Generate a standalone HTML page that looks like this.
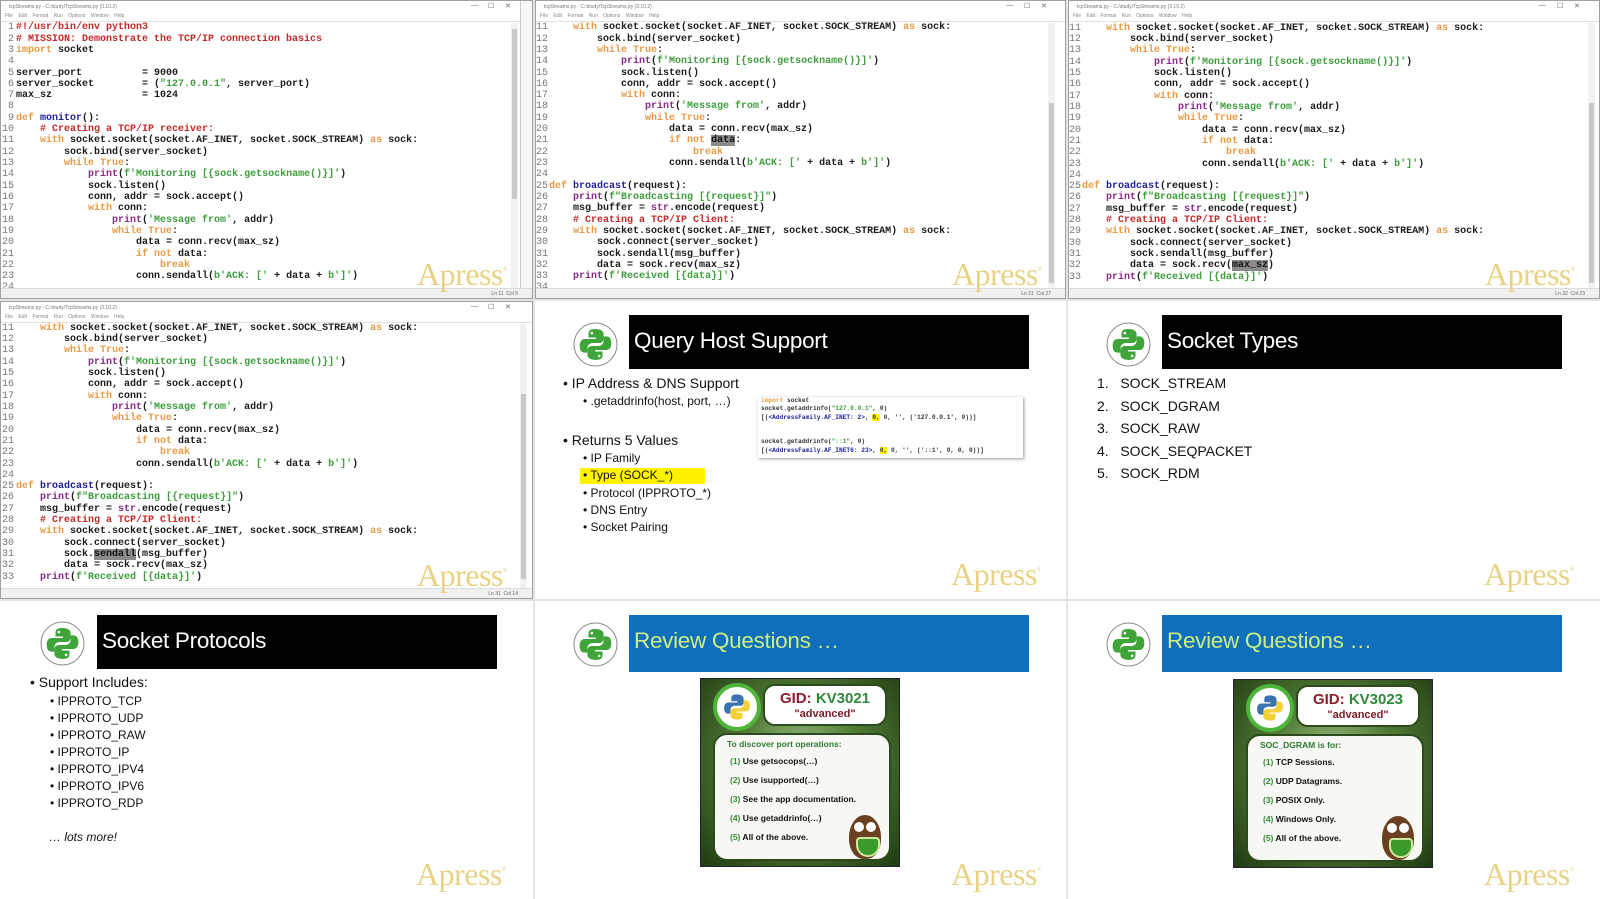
<!DOCTYPE html>
<html><head><meta charset="utf-8">
<style>
*{margin:0;padding:0;box-sizing:border-box}
body{width:1600px;height:899px;background:#e4e4e4;position:relative;overflow:hidden;font-family:"Liberation Sans",sans-serif}
.cell{position:absolute;overflow:hidden;background:#fff}
.win{border:1px solid #a0a0a0}
.tb{position:absolute;left:0;top:0;width:100%;height:12px;font-size:5px;color:#777;padding:3px 0 0 8px;white-space:nowrap}
.ctl{position:absolute;top:1px;font-size:7px;color:#666}
.mb{position:absolute;left:0;top:12px;width:100%;height:9px;font-size:5px;color:#888;padding-left:4px;word-spacing:4px;border-bottom:1px solid #e0e0e0}
pre{position:absolute;margin:0;font-family:"Liberation Mono",monospace;font-weight:bold;font-size:10px;line-height:11.32px;color:#1c1c1c}
.ln{color:#777;font-weight:normal;text-align:right}
.k{color:#e99a45}.c{color:#c22a2a}.s{color:#3d9e3d}.b{color:#8a2b8a}.f{color:#1f1f9a}
.hl{background:#8a8a8a;color:#111}
.sb{position:absolute;top:22px;width:7px;height:266px;background:#f2f2f2}
.sb i{position:absolute;left:1px;width:5px;background:#c9c9c9;display:block}
.st{position:absolute;left:0;bottom:0;width:100%;height:10px;background:#f0f0f0;border-top:1px solid #dcdcdc;font-size:5px;color:#666;text-align:right;padding:2px 14px 0 0}
.rs{position:absolute;right:0;top:0;width:12px;height:100%;background:#f7f7f7;border-left:1px solid #ccc}
.apress{position:absolute;left:416px;top:255px;font-family:"Liberation Serif",serif;font-size:32px;color:#e8d283;letter-spacing:-0.5px}
.apress sup{font-size:6px;vertical-align:14px}
.hdr{position:absolute;left:94px;top:14px;width:400px;height:54px;background:#000;color:#fff;font-size:22.5px;padding:13px 0 0 5px;letter-spacing:-0.3px}
.hdr.blue{background:#0f6fbd;color:#cbee80}
.logo{position:absolute;width:45px;height:45px}
.t1{position:absolute;font-size:14px;color:#111;white-space:nowrap}
.t2{position:absolute;font-size:12px;color:#111;white-space:nowrap}
.card{position:absolute;width:200px;height:189px;background:radial-gradient(ellipse at 50% 45%,#a8c890 0%,#4f7a34 45%,#1f3a12 100%);border:1px solid #223}
.gid{position:absolute;left:62px;top:5px;width:124px;height:42px;background:#fff;border-radius:12px;border:2px solid #2c4a1c;font-weight:bold;text-align:center}
.gid .a{font-size:15px;color:#8c1d2d;margin-top:4px}
.gid .a span{color:#2f8a3a}
.gid .b2{font-size:11px;color:#7a1a26;margin-top:1px}
.q{position:absolute;left:12px;top:54px;width:178px;height:128px;background:#f7f8f4;border-radius:14px;border:2px solid #2c4a1c;font-weight:bold;font-size:8.5px;color:#111}
.q div{position:absolute;white-space:nowrap}
.q .n{color:#3a8a3a}
.pylogo{position:absolute;left:12px;top:4px;width:48px;height:48px;border-radius:50%;background:#fff;border:4px solid #4fb43a}
</style></head><body>
<svg width="0" height="0" style="position:absolute">
<defs>
<symbol id="py" viewBox="0 0 100 100">
<path d="M49 8C33 8 31 14 31 22V31H51V35H21C12 35 7 42 7 54C7 66 12 72 21 72H28V61C28 52 34 46 43 46H60C67 46 72 41 72 34V22C72 14 65 8 49 8Z"/>
<path transform="rotate(180 50 50)" d="M49 8C33 8 31 14 31 22V31H51V35H21C12 35 7 42 7 54C7 66 12 72 21 72H28V61C28 52 34 46 43 46H60C67 46 72 41 72 34V22C72 14 65 8 49 8Z"/>
<circle cx="40" cy="19" r="3.5" fill="#fff"/><circle cx="60" cy="81" r="3.5" fill="#fff"/>
</symbol>
</defs></svg>

<!-- ROW 1 COL 1 -->
<div class="cell win" style="left:0;top:0;width:533px;height:299px">
<div class="tb">tcpStreams.py - C:/study/TcpStreams.py (3.10.2)</div>
<div class="ctl" style="left:470px">—</div><div class="ctl" style="left:487px">☐</div><div class="ctl" style="left:504px">✕</div>
<div class="mb">File Edit Format Run Options Window Help</div>
<pre class="ln" style="left:0;top:21.3px;width:13px">1
2
3
4
5
6
7
8
9
10
11
12
13
14
15
16
17
18
19
20
21
22
23
24</pre>
<pre style="left:15px;top:21.3px"><span class="c">#!/usr/bin/env python3</span>
<span class="c"># MISSION: Demonstrate the TCP/IP connection basics</span>
<span class="k">import</span> socket

server_port          = 9000
server_socket        = (<span class="s">"127.0.0.1"</span>, server_port)
max_sz               = 1024

<span class="k">def</span> <span class="f">monitor</span>():
    <span class="c"># Creating a TCP/IP receiver:</span>
    <span class="k">with</span> socket.socket(socket.AF_INET, socket.SOCK_STREAM) <span class="k">as</span> sock:
        sock.bind(server_socket)
        <span class="k">while True</span>:
            <span class="b">print</span>(<span class="s">f'Monitoring [{sock.getsockname()}]'</span>)
            sock.listen()
            conn, addr = sock.accept()
            <span class="k">with</span> conn:
                <span class="b">print</span>(<span class="s">'Message from'</span>, addr)
                <span class="k">while True</span>:
                    data = conn.recv(max_sz)
                    <span class="k">if not</span> data:
                        <span class="k">break</span>
                    conn.sendall(<span class="s">b'ACK: ['</span> + data + <span class="s">b']'</span>)
</pre>
<div class="sb" style="left:510px"><i style="top:6px;height:170px"></i></div>
<div class="rs"></div>
<div class="st">Ln 11 &nbsp;Col 5</div>
<div class="apress">Apress<sup>®</sup></div>
</div>

<!-- ROW 1 COL 2 -->
<div class="cell win" style="left:535px;top:0;width:531px;height:299px">
<div class="tb">tcpStreams.py - C:/study/TcpStreams.py (3.10.2)</div>
<div class="ctl" style="left:470px">—</div><div class="ctl" style="left:488px">☐</div><div class="ctl" style="left:505px">✕</div>
<div class="mb">File Edit Format Run Options Window Help</div>
<pre class="ln" style="left:0;top:21.3px;width:11px">11
12
13
14
15
16
17
18
19
20
21
22
23
24
25
26
27
28
29
30
31
32
33
34</pre>
<pre style="left:13px;top:21.3px">    <span class="k">with</span> socket.socket(socket.AF_INET, socket.SOCK_STREAM) <span class="k">as</span> sock:
        sock.bind(server_socket)
        <span class="k">while True</span>:
            <span class="b">print</span>(<span class="s">f'Monitoring [{sock.getsockname()}]'</span>)
            sock.listen()
            conn, addr = sock.accept()
            <span class="k">with</span> conn:
                <span class="b">print</span>(<span class="s">'Message from'</span>, addr)
                <span class="k">while True</span>:
                    data = conn.recv(max_sz)
                    <span class="k">if not</span> <span class="hl">data</span>:
                        <span class="k">break</span>
                    conn.sendall(<span class="s">b'ACK: ['</span> + data + <span class="s">b']'</span>)

<span class="k">def</span> <span class="f">broadcast</span>(request):
    <span class="b">print</span>(<span class="s">f"Broadcasting [{request}]"</span>)
    msg_buffer = <span class="b">str</span>.encode(request)
    <span class="c"># Creating a TCP/IP Client:</span>
    <span class="k">with</span> socket.socket(socket.AF_INET, socket.SOCK_STREAM) <span class="k">as</span> sock:
        sock.connect(server_socket)
        sock.sendall(msg_buffer)
        data = sock.recv(max_sz)
    <span class="b">print</span>(<span class="s">f'Received [{data}]'</span>)
</pre>
<div class="sb" style="left:512px"><i style="top:80px;height:180px"></i></div>
<div class="st">Ln 21 &nbsp;Col 27</div>
<div class="apress">Apress<sup>®</sup></div>
</div>

<!-- ROW 1 COL 3 -->
<div class="cell win" style="left:1068px;top:0;width:532px;height:299px">
<div class="tb">tcpStreams.py - C:/study/TcpStreams.py (3.10.2)</div>
<div class="ctl" style="left:470px">—</div><div class="ctl" style="left:488px">☐</div><div class="ctl" style="left:505px">✕</div>
<div class="mb">File Edit Format Run Options Window Help</div>
<pre class="ln" style="left:0;top:21.8px;width:11px">11
12
13
14
15
16
17
18
19
20
21
22
23
24
25
26
27
28
29
30
31
32
33</pre>
<pre style="left:13px;top:21.8px">    <span class="k">with</span> socket.socket(socket.AF_INET, socket.SOCK_STREAM) <span class="k">as</span> sock:
        sock.bind(server_socket)
        <span class="k">while True</span>:
            <span class="b">print</span>(<span class="s">f'Monitoring [{sock.getsockname()}]'</span>)
            sock.listen()
            conn, addr = sock.accept()
            <span class="k">with</span> conn:
                <span class="b">print</span>(<span class="s">'Message from'</span>, addr)
                <span class="k">while True</span>:
                    data = conn.recv(max_sz)
                    <span class="k">if not</span> data:
                        <span class="k">break</span>
                    conn.sendall(<span class="s">b'ACK: ['</span> + data + <span class="s">b']'</span>)

<span class="k">def</span> <span class="f">broadcast</span>(request):
    <span class="b">print</span>(<span class="s">f"Broadcasting [{request}]"</span>)
    msg_buffer = <span class="b">str</span>.encode(request)
    <span class="c"># Creating a TCP/IP Client:</span>
    <span class="k">with</span> socket.socket(socket.AF_INET, socket.SOCK_STREAM) <span class="k">as</span> sock:
        sock.connect(server_socket)
        sock.sendall(msg_buffer)
        data = sock.recv(<span class="hl">max_sz</span>)
    <span class="b">print</span>(<span class="s">f'Received [{data}]'</span>)</pre>
<div class="sb" style="left:519px"><i style="top:80px;height:180px"></i></div>
<div class="st">Ln 32 &nbsp;Col 23</div>
<div class="apress">Apress<sup>®</sup></div>
</div>

<!-- ROW 2 COL 1 -->
<div class="cell win" style="left:0;top:301px;width:533px;height:298px">
<div class="tb">tcpStreams.py - C:/study/TcpStreams.py (3.10.2)</div>
<div class="ctl" style="left:470px">—</div><div class="ctl" style="left:487px">☐</div><div class="ctl" style="left:504px">✕</div>
<div class="mb">File Edit Format Run Options Window Help</div>
<pre class="ln" style="left:0;top:20.8px;width:13px">11
12
13
14
15
16
17
18
19
20
21
22
23
24
25
26
27
28
29
30
31
32
33</pre>
<pre style="left:15px;top:20.8px">    <span class="k">with</span> socket.socket(socket.AF_INET, socket.SOCK_STREAM) <span class="k">as</span> sock:
        sock.bind(server_socket)
        <span class="k">while True</span>:
            <span class="b">print</span>(<span class="s">f'Monitoring [{sock.getsockname()}]'</span>)
            sock.listen()
            conn, addr = sock.accept()
            <span class="k">with</span> conn:
                <span class="b">print</span>(<span class="s">'Message from'</span>, addr)
                <span class="k">while True</span>:
                    data = conn.recv(max_sz)
                    <span class="k">if not</span> data:
                        <span class="k">break</span>
                    conn.sendall(<span class="s">b'ACK: ['</span> + data + <span class="s">b']'</span>)

<span class="k">def</span> <span class="f">broadcast</span>(request):
    <span class="b">print</span>(<span class="s">f"Broadcasting [{request}]"</span>)
    msg_buffer = <span class="b">str</span>.encode(request)
    <span class="c"># Creating a TCP/IP Client:</span>
    <span class="k">with</span> socket.socket(socket.AF_INET, socket.SOCK_STREAM) <span class="k">as</span> sock:
        sock.connect(server_socket)
        sock.<span class="hl">sendall</span>(msg_buffer)
        data = sock.recv(max_sz)
    <span class="b">print</span>(<span class="s">f'Received [{data}]'</span>)</pre>
<div class="sb" style="left:519px"><i style="top:70px;height:185px"></i></div>
<div class="st">Ln 31 &nbsp;Col 14</div>
<div class="apress">Apress<sup>®</sup></div>
</div>

<!-- ROW 2 COL 2 -->
<div class="cell" style="left:535px;top:301px;width:531px;height:298px">
<div class="hdr">Query Host Support</div>
<svg class="logo" style="left:38px;top:21px" viewBox="0 0 44 44"><circle cx="22" cy="22" r="21" fill="#fff" stroke="#8a8a8a" stroke-width="1"/><svg x="4" y="4" width="36" height="36" fill="#3fa53a"><use href="#py"/></svg></svg>
<div class="t1" style="left:28px;top:74px">• IP Address &amp; DNS Support</div>
<div class="t2" style="left:48px;top:93px">• .getaddrinfo(host, port, …)</div>
<div class="t1" style="left:28px;top:131px">• Returns 5 Values</div>
<div style="position:absolute;left:45px;top:167px;width:125px;height:16px;background:#fff200"></div>
<div class="t2" style="left:48px;top:150px">• IP Family</div>
<div class="t2" style="left:48px;top:167px">• Type (SOCK_*)</div>
<div class="t2" style="left:48px;top:185px">• Protocol (IPPROTO_*)</div>
<div class="t2" style="left:48px;top:202px">• DNS Entry</div>
<div class="t2" style="left:48px;top:219px">• Socket Pairing</div>
<div style="position:absolute;left:223px;top:96px;width:265px;height:61px;background:#fff;box-shadow:1px 1px 3px #999"></div>
<pre style="left:226px;top:96px;font-size:6.2px;line-height:8.3px;font-weight:bold;color:#333"><span class="k">import</span> socket
socket.getaddrinfo(<span class="s">"127.0.0.1"</span>, 0)
[(<span class="f">&lt;AddressFamily.AF_INET: 2&gt;</span>, <span style="background:#fff200">0,</span> 0, '', ('127.0.0.1', 0))]


socket.getaddrinfo(<span class="s">"::1"</span>, 0)
[(<span class="f">&lt;AddressFamily.AF_INET6: 23&gt;</span>, <span style="background:#fff200">0,</span> 0, '', ('::1', 0, 0, 0))]</pre>
<div class="apress">Apress<sup>®</sup></div>
</div>

<!-- ROW 2 COL 3 -->
<div class="cell" style="left:1068px;top:301px;width:532px;height:298px">
<div class="hdr">Socket Types</div>
<svg class="logo" style="left:38px;top:21px" viewBox="0 0 44 44"><circle cx="22" cy="22" r="21" fill="#fff" stroke="#8a8a8a" stroke-width="1"/><svg x="4" y="4" width="36" height="36" fill="#3fa53a"><use href="#py"/></svg></svg>
<div class="t1" style="left:29px;top:74px">1.&nbsp;&nbsp;&nbsp;SOCK_STREAM</div>
<div class="t1" style="left:29px;top:97px">2.&nbsp;&nbsp;&nbsp;SOCK_DGRAM</div>
<div class="t1" style="left:29px;top:119px">3.&nbsp;&nbsp;&nbsp;SOCK_RAW</div>
<div class="t1" style="left:29px;top:142px">4.&nbsp;&nbsp;&nbsp;SOCK_SEQPACKET</div>
<div class="t1" style="left:29px;top:164px">5.&nbsp;&nbsp;&nbsp;SOCK_RDM</div>
<div class="apress">Apress<sup>®</sup></div>
</div>

<!-- ROW 3 COL 1 -->
<div class="cell" style="left:0;top:601px;width:533px;height:298px">
<div class="hdr" style="left:97px">Socket Protocols</div>
<svg class="logo" style="left:40px;top:20px" viewBox="0 0 44 44"><circle cx="22" cy="22" r="21" fill="#fff" stroke="#8a8a8a" stroke-width="1"/><svg x="4" y="4" width="36" height="36" fill="#3fa53a"><use href="#py"/></svg></svg>
<div class="t1" style="left:30px;top:73px">• Support Includes:</div>
<div class="t2" style="left:50px;top:93px">• IPPROTO_TCP</div>
<div class="t2" style="left:50px;top:110px">• IPPROTO_UDP</div>
<div class="t2" style="left:50px;top:127px">• IPPROTO_RAW</div>
<div class="t2" style="left:50px;top:144px">• IPPROTO_IP</div>
<div class="t2" style="left:50px;top:161px">• IPPROTO_IPV4</div>
<div class="t2" style="left:50px;top:178px">• IPPROTO_IPV6</div>
<div class="t2" style="left:50px;top:195px">• IPPROTO_RDP</div>
<div class="t2" style="left:49px;top:229px;font-style:italic">… lots more!</div>
<div class="apress">Apress<sup>®</sup></div>
</div>

<!-- ROW 3 COL 2 -->
<div class="cell" style="left:535px;top:601px;width:531px;height:298px">
<div class="hdr blue" style="height:57px">Review Questions …</div>
<svg class="logo" style="left:38px;top:21px" viewBox="0 0 44 44"><circle cx="22" cy="22" r="21" fill="#fff" stroke="#8a8a8a" stroke-width="1"/><svg x="4" y="4" width="36" height="36" fill="#3fa53a"><use href="#py"/></svg></svg>
<div class="card" style="left:165px;top:77px">
<div class="pylogo"><svg style="position:absolute;left:5px;top:5px" width="30" height="30" viewBox="0 0 100 100"><path fill="#3b74b0" d="M49 8C33 8 31 14 31 22V31H51V35H21C12 35 7 42 7 54C7 66 12 72 21 72H28V61C28 52 34 46 43 46H60C67 46 72 41 72 34V22C72 14 65 8 49 8Z"/><path fill="#f3cf3a" transform="rotate(180 50 50)" d="M49 8C33 8 31 14 31 22V31H51V35H21C12 35 7 42 7 54C7 66 12 72 21 72H28V61C28 52 34 46 43 46H60C67 46 72 41 72 34V22C72 14 65 8 49 8Z"/></svg></div>
<div class="gid"><div class="a">GID: <span>KV3021</span></div><div class="b2">"advanced"</div></div>
<div class="q">
<div style="left:12px;top:4px;color:#2f7a35">To discover port operations:</div>
<div style="left:15px;top:21px"><span class="n">(1)</span> Use getsocops(…)</div>
<div style="left:15px;top:40px"><span class="n">(2)</span> Use isupported(…)</div>
<div style="left:15px;top:59px"><span class="n">(3)</span> See the app documentation.</div>
<div style="left:15px;top:78px"><span class="n">(4)</span> Use getaddrinfo(…)</div>
<div style="left:15px;top:97px"><span class="n">(5)</span> All of the above.</div>
</div>
<div style="position:absolute;left:148px;top:136px;width:32px;height:44px;background:#6b4020;border-radius:50% 50% 45% 45%"></div>
<div style="position:absolute;left:153px;top:143px;width:10px;height:10px;background:#fff;border-radius:50%"></div>
<div style="position:absolute;left:165px;top:143px;width:10px;height:10px;background:#fff;border-radius:50%"></div>
<div style="position:absolute;left:155px;top:158px;width:24px;height:20px;background:#3a9a2a;border:2px solid #cfe8a0;border-radius:4px 4px 12px 12px"></div>
</div>
<div class="apress">Apress<sup>®</sup></div>
</div>

<!-- ROW 3 COL 3 -->
<div class="cell" style="left:1068px;top:601px;width:532px;height:298px">
<div class="hdr blue" style="height:57px">Review Questions …</div>
<svg class="logo" style="left:38px;top:21px" viewBox="0 0 44 44"><circle cx="22" cy="22" r="21" fill="#fff" stroke="#8a8a8a" stroke-width="1"/><svg x="4" y="4" width="36" height="36" fill="#3fa53a"><use href="#py"/></svg></svg>
<div class="card" style="left:165px;top:78px">
<div class="pylogo"><svg style="position:absolute;left:5px;top:5px" width="30" height="30" viewBox="0 0 100 100"><path fill="#3b74b0" d="M49 8C33 8 31 14 31 22V31H51V35H21C12 35 7 42 7 54C7 66 12 72 21 72H28V61C28 52 34 46 43 46H60C67 46 72 41 72 34V22C72 14 65 8 49 8Z"/><path fill="#f3cf3a" transform="rotate(180 50 50)" d="M49 8C33 8 31 14 31 22V31H51V35H21C12 35 7 42 7 54C7 66 12 72 21 72H28V61C28 52 34 46 43 46H60C67 46 72 41 72 34V22C72 14 65 8 49 8Z"/></svg></div>
<div class="gid"><div class="a">GID: <span>KV3023</span></div><div class="b2">"advanced"</div></div>
<div class="q">
<div style="left:12px;top:4px;color:#2f7a35">SOC_DGRAM is for:</div>
<div style="left:15px;top:21px"><span class="n">(1)</span> TCP Sessions.</div>
<div style="left:15px;top:40px"><span class="n">(2)</span> UDP Datagrams.</div>
<div style="left:15px;top:59px"><span class="n">(3)</span> POSIX Only.</div>
<div style="left:15px;top:78px"><span class="n">(4)</span> Windows Only.</div>
<div style="left:15px;top:97px"><span class="n">(5)</span> All of the above.</div>
</div>
<div style="position:absolute;left:148px;top:136px;width:32px;height:44px;background:#6b4020;border-radius:50% 50% 45% 45%"></div>
<div style="position:absolute;left:153px;top:143px;width:10px;height:10px;background:#fff;border-radius:50%"></div>
<div style="position:absolute;left:165px;top:143px;width:10px;height:10px;background:#fff;border-radius:50%"></div>
<div style="position:absolute;left:155px;top:158px;width:24px;height:20px;background:#3a9a2a;border:2px solid #cfe8a0;border-radius:4px 4px 12px 12px"></div>
</div>
<div class="apress">Apress<sup>®</sup></div>
</div>

</body></html>
